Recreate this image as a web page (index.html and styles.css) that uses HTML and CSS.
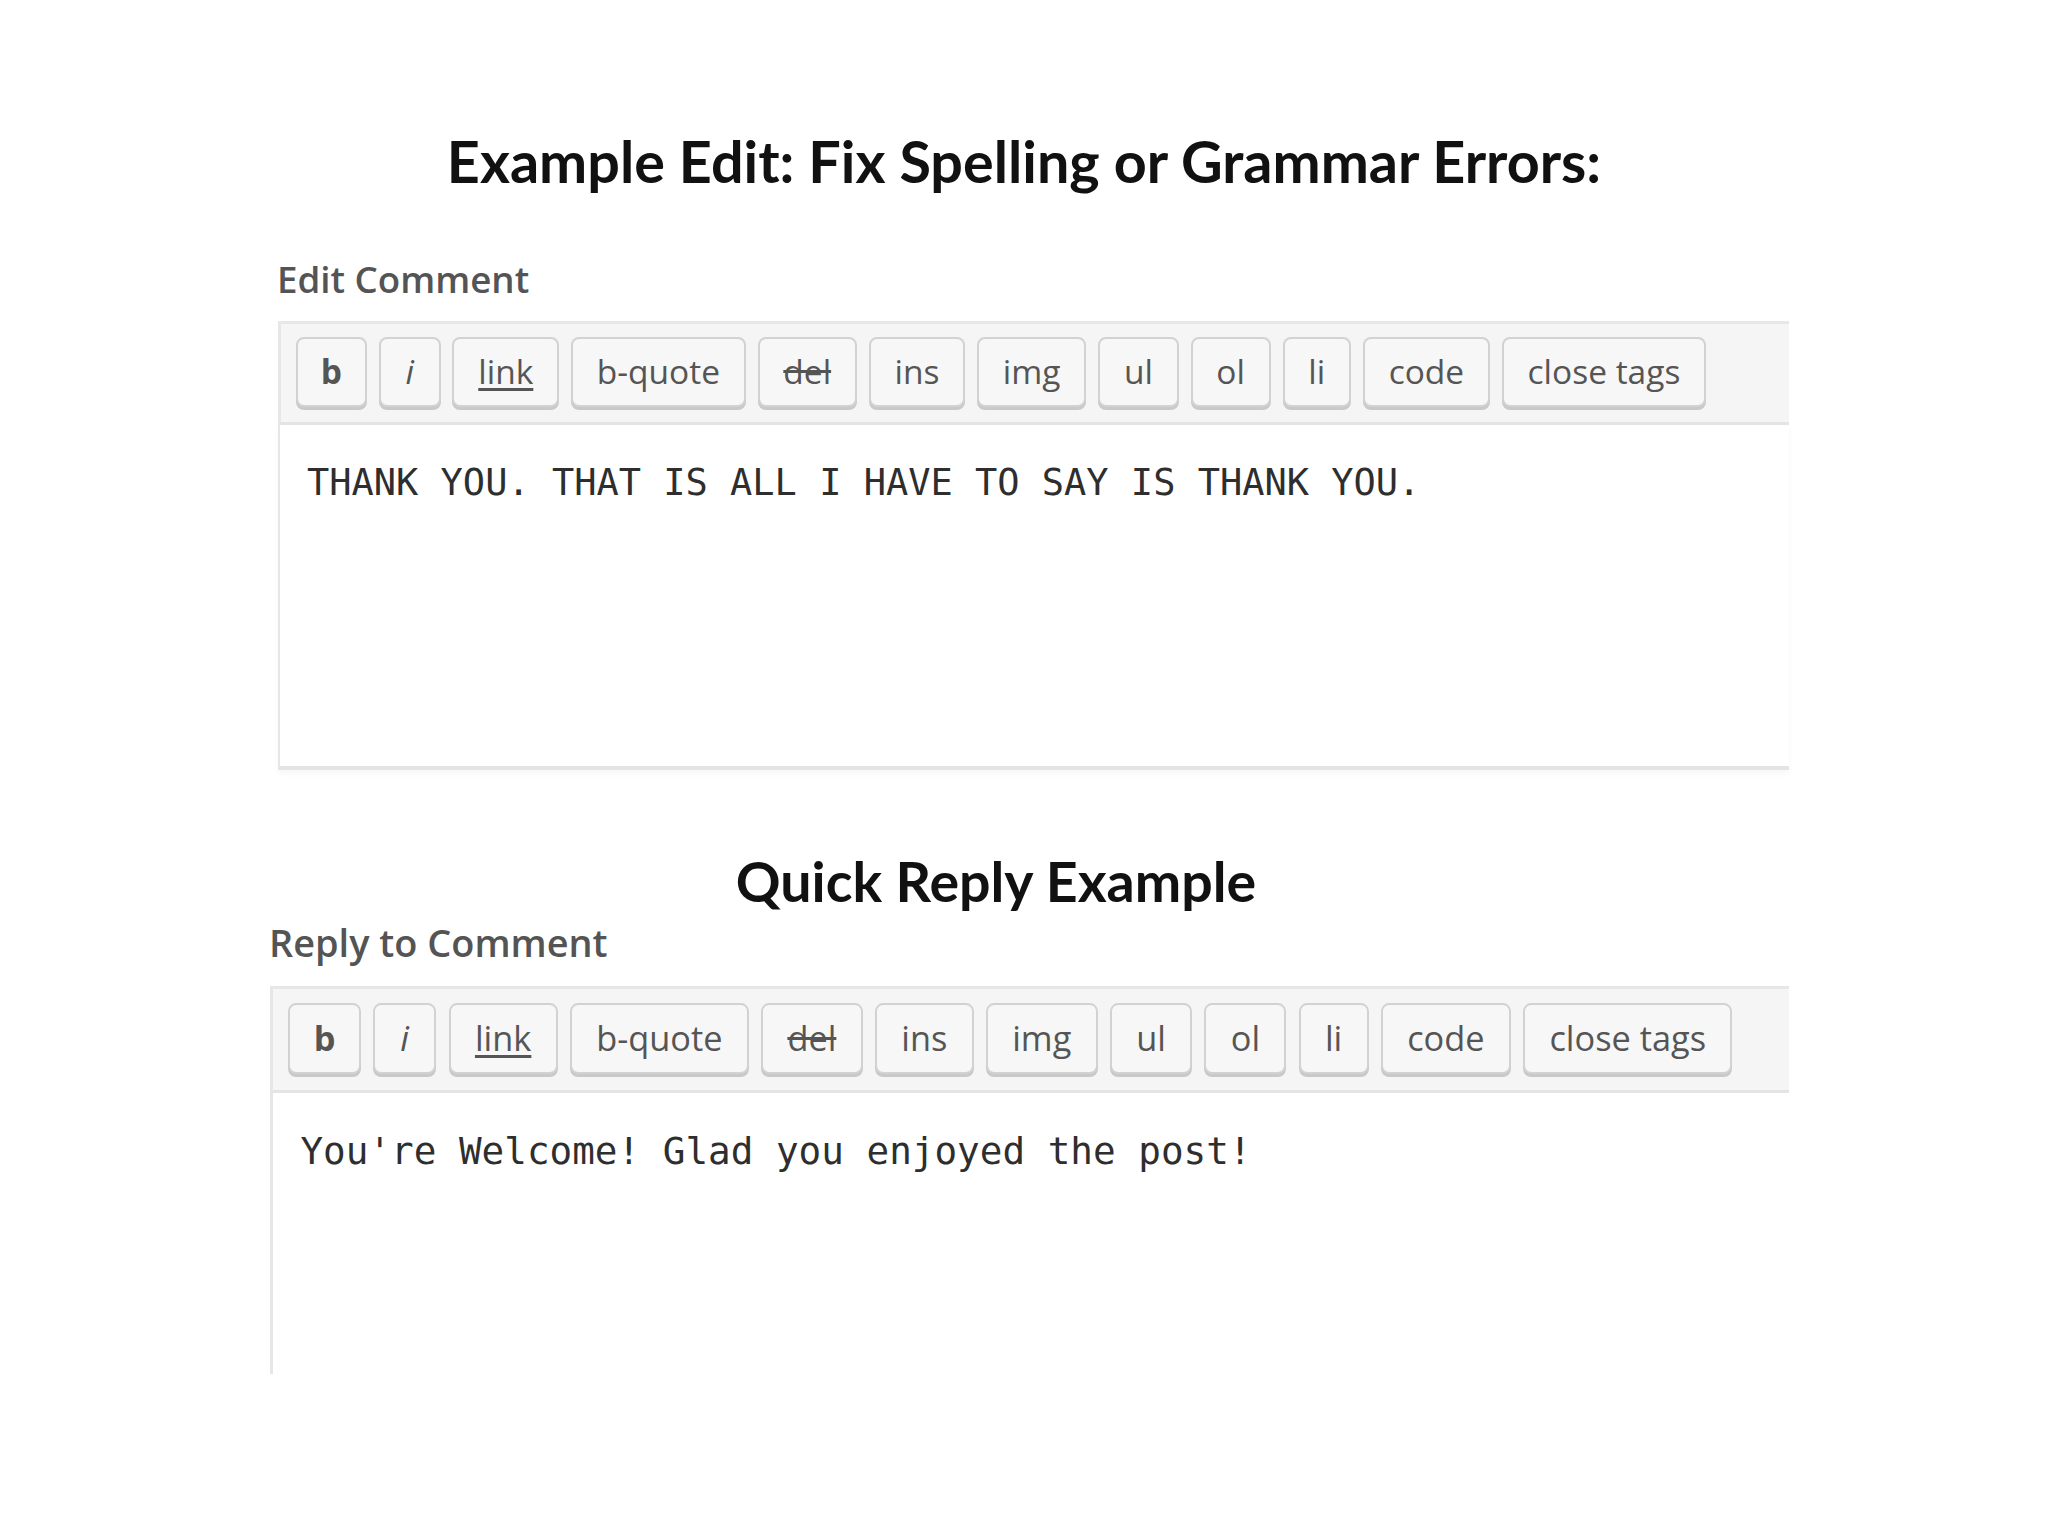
FILE: index.html
```html
<!DOCTYPE html>
<html lang="en">

<head>
  <meta charset="UTF-8">
  <meta name="viewport" content="width=device-width, initial-scale=1.0">
  <title>Comment Editing Examples</title>
  <link rel="stylesheet" href="styles.css">
</head>

<body>
  <div class="page">
    <h1 class="title">Example Edit: Fix Spelling or Grammar Errors:</h1>

    <div class="panel panel-edit">
      <h3 class="panel-label">Edit Comment</h3>
      <div class="editor">
        <div class="quicktags">
          <button type="button" class="qt-btn qt-b">b</button>
          <button type="button" class="qt-btn qt-i">i</button>
          <button type="button" class="qt-btn qt-link">link</button>
          <button type="button" class="qt-btn">b-quote</button>
          <button type="button" class="qt-btn qt-del">del</button>
          <button type="button" class="qt-btn">ins</button>
          <button type="button" class="qt-btn">img</button>
          <button type="button" class="qt-btn">ul</button>
          <button type="button" class="qt-btn">ol</button>
          <button type="button" class="qt-btn">li</button>
          <button type="button" class="qt-btn">code</button>
          <button type="button" class="qt-btn">close tags</button>
        </div>
        <textarea class="editor-area" readonly>THANK YOU. THAT IS ALL I HAVE TO SAY IS THANK YOU.</textarea>
      </div>
    </div>

    <h2 class="subtitle">Quick Reply Example</h2>

    <div class="panel panel-reply">
      <h3 class="panel-label">Reply to Comment</h3>
      <div class="editor">
        <div class="quicktags">
          <button type="button" class="qt-btn qt-b">b</button>
          <button type="button" class="qt-btn qt-i">i</button>
          <button type="button" class="qt-btn qt-link">link</button>
          <button type="button" class="qt-btn">b-quote</button>
          <button type="button" class="qt-btn qt-del">del</button>
          <button type="button" class="qt-btn">ins</button>
          <button type="button" class="qt-btn">img</button>
          <button type="button" class="qt-btn">ul</button>
          <button type="button" class="qt-btn">ol</button>
          <button type="button" class="qt-btn">li</button>
          <button type="button" class="qt-btn">code</button>
          <button type="button" class="qt-btn">close tags</button>
        </div>
        <textarea class="editor-area" readonly>You're Welcome! Glad you enjoyed the post!</textarea>
      </div>
    </div>
  </div>
</body>

</html>
```

FILE: styles.css
```css
* {
  margin: 0;
  padding: 0;
  box-sizing: border-box;
}

body {
  font-family: 'Open Sans', 'Noto Sans', sans-serif;
  background: #fff;
  color: #111;
}

.page {
  width: 2048px;
  padding-top: 126px;
}

.title,
.subtitle {
  font-family: Lato, 'Open Sans', sans-serif;
  font-weight: 700;
  line-height: 1.2;
  text-align: center;
  color: #111;
}

.title {
  font-size: 57.5px;
}

.subtitle {
  font-size: 55.5px;
  margin-top: 78px;
  padding-right: 56px;
}

/* comment panels (label + quicktags editor) */
.panel-edit {
  margin-top: 62px;
  margin-left: 276px;
  width: 1513px;
}

.panel-reply {
  margin-top: 5px;
  margin-left: 268px;
  width: 1521px;
}

.panel-label {
  font-weight: 600;
  line-height: 1.2;
  color: #545454;
  padding-left: 1px;
}

.panel-edit .panel-label {
  font-size: 36.7px;
  margin-bottom: 20px;
}

.panel-reply .panel-label {
  font-size: 37.9px;
  margin-bottom: 21px;
}

/* editor sizes are in em so the reply box can be a touch larger */
.editor {
  font-size: 32px;
  margin-left: 2px;
}

.panel-reply .editor {
  font-size: 32.8px;
}

.quicktags {
  display: flex;
  gap: 0.37em;
  background: #f5f5f5;
  border-top: 0.094em solid #e7e7e7;
  border-left: 0.094em solid #e7e7e7;
  border-bottom: 0.094em solid #e4e4e4;
  padding: 0.41em 0 0.47em 0.47em;
}

.qt-btn {
  font-family: 'Open Sans', 'Noto Sans', sans-serif;
  font-size: 1.047em;
  color: #555;
  height: 2.09em;
  padding: 0 0.71em;
  background: #f7f7f7;
  border: 2px solid #d2d2d2;
  border-radius: 0.24em;
  box-shadow: 0 0.09em 0 #c9c9c9;
  line-height: 1;
  cursor: pointer;
}

.qt-b {
  font-weight: 700;
  padding: 0 0.68em;
}

.qt-i {
  font-style: italic;
  padding: 0 0.74em;
}

.qt-link {
  text-decoration: underline;
  text-underline-offset: 0.12em;
}

.qt-del {
  text-decoration: line-through;
}

.editor-area {
  display: block;
  width: 100%;
  font-family: 'DejaVu Sans Mono', 'Liberation Mono', monospace;
  font-size: 1.156em;
  line-height: 1.4;
  color: #2e2e2e;
  background: #fff;
  border: none;
  border-left: 0.081em solid #e7e7e7;
  padding: 0.865em 0 0 0.73em;
  resize: none;
  outline: none;
  overflow: hidden;
}

.panel-edit .editor-area {
  height: 345px;
  border-bottom: 4px solid #e4e4e4;
  box-shadow: 0 4px 6px rgba(0, 0, 0, 0.03);
}

.panel-reply .editor-area {
  height: 281px;
  font-size: 1.147em;
}
```
